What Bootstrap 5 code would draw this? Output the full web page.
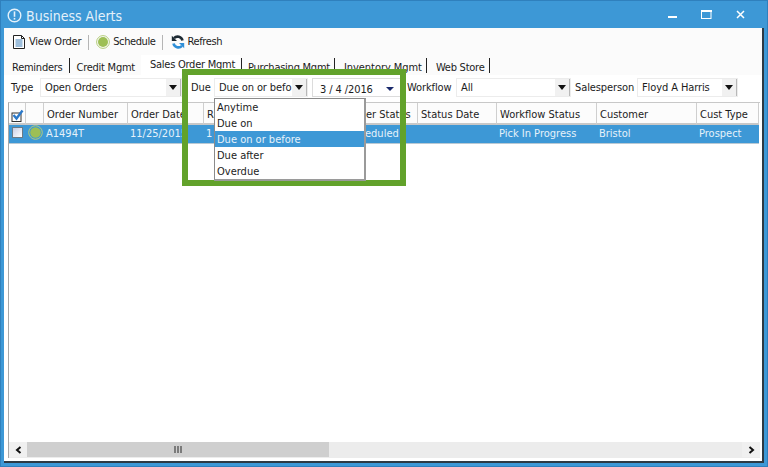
<!DOCTYPE html>
<html lang="en"><head><meta charset="utf-8"><title>Business Alerts</title>
<link rel="stylesheet" href="https://cdn.jsdelivr.net/npm/bootstrap@5.3.0/dist/css/bootstrap.min.css">
<style>
html,body{height:100%;margin:0;overflow:hidden}
body{font-family:"DejaVu Sans Condensed","Liberation Sans",sans-serif;font-size:11px;color:#1c1c1c;background:#3d98d6}
.win{height:467px;width:768px;position:relative;background:#3d98d6;box-shadow:inset 0 0 0 1px #2f80bd}
.titlebar{height:28px;color:#e4f1fa;font-size:14px;padding-left:7px;padding-top:2px}
.titletxt{margin-top:2px}
.winbtns{margin-left:auto;padding-right:23px;gap:24px;margin-top:-2px}
.client{margin:0 4px 4px 4px;height:435px;background:#fff;border-right:2px solid #2d3a44;border-bottom:2px solid #2d3a44}
.tools{height:27px;padding:1px 0 0 9px;background:#fbfbfb;letter-spacing:-.25px}
.tool{gap:4px}
.tooltight{gap:3px;letter-spacing:-.4px}
.tsep{width:1px;height:15px;background:#b5b5b5;margin:0 7px}
.tsep2{margin:0 8px 0 6px}
.tabrow{height:20px;padding-left:8px;background:#fbfbfb;border:0;letter-spacing:-.25px}
.tabrow .nav-link{padding:3px 6px 0 0;margin:0;height:18px;margin-top:2px;border:0;border-radius:0;color:#1c1c1c;background:transparent;line-height:15px}
.tabrow .nav-link.tabon{background:#fff;height:20px;margin-top:0;padding:2px 5px 0 9px}
.tabrow .nav-link.tabwide{letter-spacing:-.05px}
.tabsep{width:1px;height:15px;background:#222;margin:3px 6px 0 1px}
.tabrow .tabsep2{margin:3px 9px 0 -2px}
.filters{height:27px;padding:3px 0 0 7px;letter-spacing:-.1px}
.flabel{flex:none;line-height:19px;white-space:nowrap}
.lw29{width:29px}.lw23{width:23px}.lw49{width:49px}.lw62{width:62px}
.combo{flex:none;height:19px;background:#fff;border:1px solid #ececec;padding:0 0 0 4px;position:relative;line-height:17px;white-space:nowrap;overflow:hidden}
.caret{position:absolute;right:0;top:0;width:15px;height:19px;background:#f1f1f1;border-right:1px solid #b8b8b8;border-bottom:2px solid #b8b8b8}
.caret::after{content:"";position:absolute;left:3px;top:6px;border:4px solid transparent;border-top:5px solid #111;border-bottom:0}
.w142{width:142px;margin-right:9px}.w94{width:94px;margin-right:4px}.w89{width:89px;margin-right:6px}
.w115{width:115px;margin-right:4px}.w101{width:101px}
.datev{padding-left:7px;padding-top:2px;border:1px solid #dcdcdc}
.datev::after{content:"";position:absolute;right:6px;top:8px;border:4px solid transparent;border-top:4px solid #1a2a6c;border-bottom:0}
.gridw{margin:0 2px 0 4px;height:356px;border-left:1px solid #a9a9a9;border-top:1px solid #c8c8c8}
.gridt{table-layout:fixed;width:750px;margin:0;border-collapse:separate;border-spacing:0}
.gridt>*>tr>*{padding:0 0 0 3px;font-size:11px;font-weight:400;white-space:nowrap;overflow:hidden;border:0;line-height:18px;color:#1c1c1c;box-shadow:none;background:transparent}
.gridt>thead>tr>th{height:22px;line-height:16px;border-right:1px solid #cfcfcf;border-bottom:2px solid #c8c8c8;background:#fcfcfc}
.gridt tbody td{height:19px;background:#3d98d6;color:#e6f2fa;border-bottom:1px solid #b9c9d4;padding-left:2px}
.gridt .cellc{text-align:center;padding:0}
.gridt tbody .cellg{padding-left:2px;text-align:left}
.cbx{display:inline-block;width:11px;height:11px;background:linear-gradient(135deg,#c9cfe6,#fff);border:1px solid #6c7a85;vertical-align:-1px}
.hscroll{margin-top:auto;height:16px;background:#ececec}
.sbtn{width:18px;height:15px;background:#f0f0f0}
.sthumb{width:302px;height:15px;background:#cfcfcf}
.greenbox{position:absolute;left:182px;top:69px;width:224px;height:117px;border:6px solid #62a22b}
.ddlist{position:absolute;left:214px;top:98px;width:152px;min-width:0;display:block;padding:0;margin:0;border:1px solid #8b8b8b;border-right:2px solid #9a9a9a;border-bottom:2px solid #9a9a9a;border-radius:0;background:#fff;font-size:11px}
.ddlist .dropdown-item{height:16px;padding:0 2px;line-height:17px;color:#1c1c1c;font-size:11px}
.ddlist .dropdown-item.active{background:#3d98d6;color:#e6f2fa}
</style></head><body>
<div class="win d-flex flex-column">
  <div class="titlebar d-flex align-items-center">
    <svg width="15" height="15" viewBox="0 0 15 15" class="me-1 flex-shrink-0"><circle cx="7.5" cy="7.5" r="6.3" fill="none" stroke="#e4f1fa" stroke-width="1.4"/><rect x="6.7" y="3.4" width="1.6" height="5.4" fill="#e4f1fa"/><rect x="6.7" y="9.9" width="1.6" height="1.7" fill="#e4f1fa"/></svg>
    <span class="titletxt">Business Alerts</span>
    <div class="winbtns d-flex align-items-center">
      <svg width="9" height="10" viewBox="0 0 9 10"><rect x="0" y="7" width="9" height="2" fill="#fff"/></svg>
      <svg width="11" height="9" viewBox="0 0 11 9"><rect x=".5" y="1" width="9.5" height="7.5" fill="none" stroke="#fff"/><rect x="0" y="0" width="11" height="2" fill="#fff"/></svg>
      <svg width="9" height="9" viewBox="0 0 9 9"><path d="M1 1l7 7M8 1L1 8" stroke="#fff" stroke-width="1.5"/></svg>
    </div>
  </div>
  <div class="client d-flex flex-column">
    <div class="tools d-flex align-items-center">
      <div class="tool d-flex align-items-center">
        <svg width="12" height="14" viewBox="0 0 12 14"><path d="M.5.5h8l3 3v10H.5z" fill="#fff" stroke="#222"/><path d="M8.5.5v3h3" fill="none" stroke="#222"/><path d="M2.5 5h7M2.5 7h7M2.5 9h7M2.5 11h7" stroke="#3d7fb8"/></svg>
        <span>View Order</span></div>
      <div class="tsep"></div>
      <div class="tool tooltight d-flex align-items-center">
        <svg width="14" height="14" viewBox="0 0 14 14"><circle cx="7" cy="7" r="6.4" fill="none" stroke="#b3cc7a"/><circle cx="7" cy="7" r="5" fill="#9dbf55"/></svg>
        <span>Schedule</span></div>
      <div class="tsep tsep2"></div>
      <div class="tool tooltight d-flex align-items-center">
        <svg width="14" height="14" viewBox="0 0 14 14"><path d="M11.500 5.500A5 5 0 0 0 3 3.200" fill="none" stroke="#1d2a33" stroke-width="2.600"/><path d="M.8 .8v5.200H6z" fill="#1d2a33"/><path d="M2.500 8.500A5 5 0 0 0 11 10.800" fill="none" stroke="#2f8fd8" stroke-width="2.600"/><path d="M13.200 13.200V8H8z" fill="#2f8fd8"/></svg>
        <span>Refresh</span></div>
    </div>
    <ul class="nav tabrow align-items-start flex-nowrap">
      <li class="nav-item"><a class="nav-link" href="#">Reminders</a></li><li class="tabsep"></li>
      <li class="nav-item"><a class="nav-link" href="#">Credit Mgmt</a></li>
      <li class="nav-item"><a class="nav-link tabon" href="#">Sales Order Mgmt</a></li><li class="tabsep"></li>
      <li class="nav-item"><a class="nav-link" href="#">Purchasing Mgmt</a></li><li class="tabsep tabsep2"></li>
      <li class="nav-item"><a class="nav-link tabwide" href="#">Inventory Mgmt</a></li><li class="tabsep tabsep2"></li>
      <li class="nav-item"><a class="nav-link" href="#">Web Store</a></li><li class="tabsep tabsep2"></li>
    </ul>
    <div class="filters d-flex align-items-start">
      <span class="flabel lw29">Type</span>
      <div class="combo w142">Open Orders<span class="caret"></span></div>
      <span class="flabel lw23">Due</span>
      <div class="combo w94">Due on or befo<span class="caret"></span></div>
      <div class="combo w89 datev">3 / 4 /2016</div>
      <span class="flabel lw49">Workflow</span>
      <div class="combo w115">All<span class="caret"></span></div>
      <span class="flabel lw62">Salesperson</span>
      <div class="combo w101">Floyd A Harris<span class="caret"></span></div>
    </div>
    <div class="gridw d-flex flex-column">
      <table class="table gridt">
        <colgroup><col style="width:17px"><col style="width:18px"><col style="width:84px"><col style="width:76px"><col style="width:141px"><col style="width:73px"><col style="width:79px"><col style="width:100px"><col style="width:100px"><col style="width:62px"></colgroup>
        <thead><tr>
          <th class="cellc"><svg width="13" height="13" viewBox="0 0 13 13"><rect x="1" y="4" width="9" height="8.500" fill="#fff" stroke="#333"/><path d="M2.500 6l3 3.500L11.500 1.500" fill="none" stroke="#2b79c9" stroke-width="2.400"/></svg></th>
          <th></th><th>Order Number</th><th>Order Date</th><th>R</th><th>Order Status</th><th>Status Date</th><th>Workflow Status</th><th>Customer</th><th>Cust Type</th>
        </tr></thead>
        <tbody><tr>
          <td class="cellc"><span class="cbx"></span></td>
          <td class="cellc cellg"><svg width="15" height="15" viewBox="0 0 15 15" style="vertical-align:-3px"><circle cx="7.500" cy="7.500" r="6.800" fill="none" stroke="#b3cc7a"/><circle cx="7.500" cy="7.500" r="5.300" fill="#9dbf55"/></svg></td>
          <td>A1494T</td><td>11/25/2015</td><td>1</td><td>Scheduled</td><td></td><td>Pick In Progress</td><td>Bristol</td><td>Prospect</td>
        </tr></tbody>
      </table>
      <div class="hscroll d-flex">
        <div class="sbtn d-flex align-items-center justify-content-center"><svg width="7" height="8" viewBox="0 0 7 8"><path d="M5.500 1L2 4l3.500 3" fill="none" stroke="#111" stroke-width="2"/></svg></div>
        <div class="sthumb d-flex align-items-center justify-content-center"><svg width="9" height="7" viewBox="0 0 9 7"><path d="M1 0v7M4 0v7M7 0v7" stroke="#666" stroke-width="1.600"/></svg></div>
        <div class="ms-auto sbtn d-flex align-items-center justify-content-center"><svg width="7" height="8" viewBox="0 0 7 8"><path d="M1.500 1L5 4L1.500 7" fill="none" stroke="#111" stroke-width="2"/></svg></div>
      </div>
    </div>
  </div>
  <ul class="dropdown-menu ddlist">
    <li><a class="dropdown-item" href="#">Anytime</a></li>
    <li><a class="dropdown-item" href="#">Due on</a></li>
    <li><a class="dropdown-item active" href="#">Due on or before</a></li>
    <li><a class="dropdown-item" href="#">Due after</a></li>
    <li><a class="dropdown-item" href="#">Overdue</a></li>
  </ul>
  <div class="greenbox"></div>
</div>
<script src="https://cdn.jsdelivr.net/npm/bootstrap@5.3.0/dist/js/bootstrap.bundle.min.js"></script>
</body></html>
